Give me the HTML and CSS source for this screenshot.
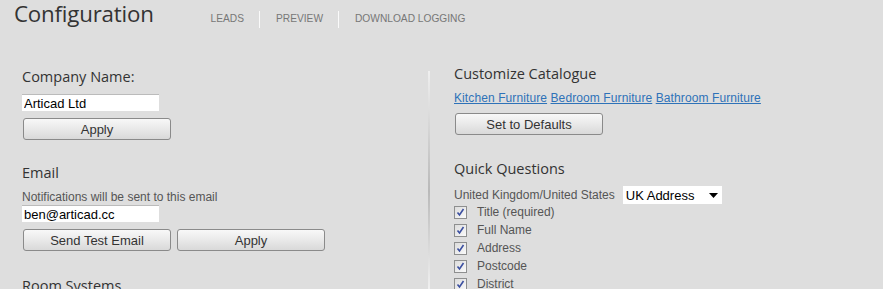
FILE: index.html
```html
<!DOCTYPE html>
<html lang="en">
<head>
  <meta charset="UTF-8">
  <title>Configuration</title>
  <link rel="stylesheet" href="styles.css">
</head>
<body>
  <div class="header">
    <h1>Configuration</h1>
    <ul class="nav">
      <li>Leads</li>
      <li>Preview</li>
      <li>Download Logging</li>
    </ul>
  </div>

  <div class="main">
    <div class="col left">
      <h2>Company Name:</h2>
      <input type="text" class="field" value="Articad Ltd">
      <div class="btns"><button>Apply</button></div>

      <h2 class="gap">Email</h2>
      <p class="note">Notifications will be sent to this email</p>
      <input type="text" class="field" value="ben@articad.cc">
      <div class="btns"><button>Send Test Email</button><button>Apply</button></div>

      <h2 class="gap wide">Room Systems</h2>
    </div>

    <div class="divider"></div>

    <div class="col right">
      <h2>Customize Catalogue</h2>
      <div class="links">
        <a href="#">Kitchen Furniture</a>
        <a href="#">Bedroom Furniture</a>
        <a href="#">Bathroom Furniture</a>
      </div>
      <div class="btns"><button>Set to Defaults</button></div>

      <h2 class="gap">Quick Questions</h2>
      <div class="country">
        <span>United Kingdom/United States</span>
        <span class="select">UK Address
          <svg width="9" height="5" viewBox="0 0 9 5"><path d="M0 0h9L4.5 5z" fill="#000"/></svg>
        </span>
      </div>
      <ul class="checks">
        <li><span class="box"><svg width="9" height="9" viewBox="0 0 9 9"><path d="M1.5 4.5l2 2.5 4-6" fill="none" stroke="#3b4fa0" stroke-width="1.6"/></svg></span>Title (required)</li>
        <li><span class="box"><svg width="9" height="9" viewBox="0 0 9 9"><path d="M1.5 4.5l2 2.5 4-6" fill="none" stroke="#3b4fa0" stroke-width="1.6"/></svg></span>Full Name</li>
        <li><span class="box"><svg width="9" height="9" viewBox="0 0 9 9"><path d="M1.5 4.5l2 2.5 4-6" fill="none" stroke="#3b4fa0" stroke-width="1.6"/></svg></span>Address</li>
        <li><span class="box"><svg width="9" height="9" viewBox="0 0 9 9"><path d="M1.5 4.5l2 2.5 4-6" fill="none" stroke="#3b4fa0" stroke-width="1.6"/></svg></span>Postcode</li>
        <li><span class="box"><svg width="9" height="9" viewBox="0 0 9 9"><path d="M1.5 4.5l2 2.5 4-6" fill="none" stroke="#3b4fa0" stroke-width="1.6"/></svg></span>District</li>
      </ul>
    </div>
  </div>
</body>
</html>
```

FILE: styles.css
```css
body {
  margin: 0; padding: 0;
  background: #dedede;
  font-family: "Liberation Sans", Arial, sans-serif;
  font-size: 12px; color: #444;
  height: 289px; overflow: hidden;
}
.header { display: flex; align-items: flex-start; padding: 0 0 0 14px; height: 57px; }
h1 {
  font-family: "Open Sans", sans-serif; font-weight: normal;
  font-size: 22.3px; line-height: 28px; color: #333; margin: 0; letter-spacing: -0.2px;
}
.nav { list-style: none; display: flex; margin: 11px 0 0 57px; padding: 0; }
.nav li {
  text-transform: uppercase; font-size: 10.2px; color: #777;
  padding: 2px 15px 3px 16px; border-left: 1px solid #fafafa; line-height: 12px;
}
.nav li:first-child { border-left: none; padding-left: 0; }

.main { display: flex; }
.col { padding-top: 10px; }
.left { width: 406px; padding-left: 22px; }
.right { padding-left: 24px; padding-top: 7px; }
.divider {
  width: 2px; margin-top: 14px; height: 240px;
  background: linear-gradient(to bottom, #efefef, #b9b9b9 50%, #f6f6f6 95%);
}
h2 {
  font-family: "Open Sans", sans-serif; font-weight: normal;
  font-size: 14.5px; color: #333; margin: 0 0 7px; line-height: 20px;
}
h2.gap { margin-top: 23px; }
h2.wide { margin-top: 25px; }
.right h2.gap { margin-top: 24px; }
.field {
  display: block; width: 137px; height: 17px; box-sizing: border-box;
  border: none; border-top: 1px solid #bbb; padding: 0 2px;
  font-family: "Liberation Sans", Arial, sans-serif; font-size: 13px; color: #000;
  background: #fff; margin-bottom: 7px;
}
.btns { display: flex; gap: 6px; margin-left: 1px; }
button {
  width: 148px; height: 22px; padding: 0;
  font-family: "Liberation Sans", Arial, sans-serif; font-size: 13px; color: #333;
  border: 1px solid #8a8a8a; border-radius: 3px;
  background: linear-gradient(to bottom, #f8f8f8, #e9e9e9 50%, #d9d9d9);
}
.note { margin: 5px 0 1px; color: #555; line-height: 14px; }
.links { margin: 4px 0 8px; letter-spacing: 0.1px; }
.links a { color: #2e72b8; text-decoration: underline; }
.country { display: flex; align-items: center; color: #555; gap: 5px; }
.select {
  display: inline-flex; align-items: center; justify-content: space-between;
  background: #fff; width: 99px; height: 18px; box-sizing: border-box;
  padding: 0 4px 0 3px; color: #000; font-size: 13px; margin-left: 3px;
}
.checks { list-style: none; margin: -1px 0 0; padding: 0; }
.checks li { display: flex; align-items: center; height: 18px; color: #555; }
.box {
  width: 11px; height: 11px; border: 1px solid #8e8f8f; box-sizing: content-box;
  background: linear-gradient(135deg, #dcdcdc, #fafafa);
  display: inline-flex; align-items: center; justify-content: center;
  margin: 0 10px 0 0;
}
```
